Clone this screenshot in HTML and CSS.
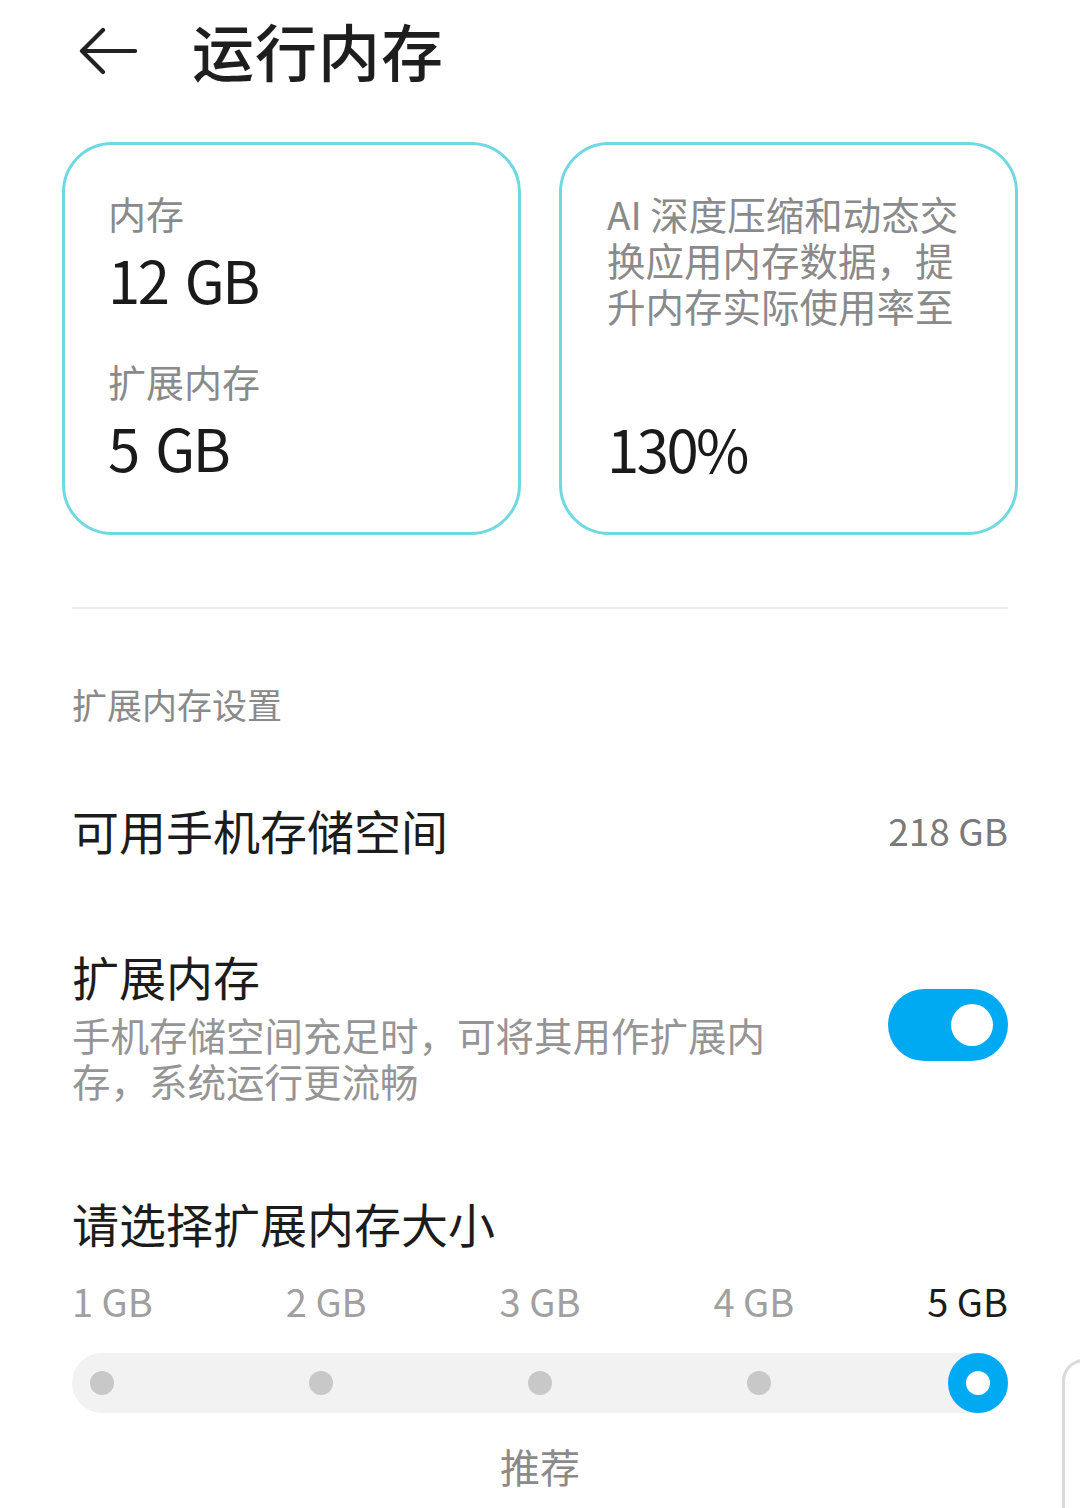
FILE: index.html
```html
<!DOCTYPE html>
<html lang="zh-CN">
<head>
<meta charset="utf-8">
<title>运行内存</title>
<link rel="stylesheet" href="styles.css">
</head>
<body>
<div class="page">
  <header class="header">
    <svg class="back" width="58" height="48" viewBox="0 0 58 48" aria-hidden="true">
      <path d="M3 24 H56 M24 3 L3 24 L24 45" fill="none" stroke="#222" stroke-width="4.2" stroke-linecap="round" stroke-linejoin="round"/>
    </svg>
    <h1 class="title">运行内存</h1>
  </header>

  <section class="cards">
    <div class="card card-left">
      <div class="card-label">内存</div>
      <div class="card-value">12 GB</div>
      <div class="card-label label-gap">扩展内存</div>
      <div class="card-value">5 GB</div>
    </div>
    <div class="card card-right">
      <div class="card-desc">AI 深度压缩和动态交换应用内存数据，提升内存实际使用率至</div>
      <div class="card-value value-gap">130%</div>
    </div>
  </section>

  <main class="main">
    <div class="divider"></div>
    <div class="section-label">扩展内存设置</div>

    <div class="row row-storage">
      <div class="row-title">可用手机存储空间</div>
      <div class="row-value">218 GB</div>
    </div>

    <div class="row row-toggle">
      <div class="row-text">
        <div class="row-title">扩展内存</div>
        <div class="row-sub">手机存储空间充足时，可将其用作扩展内存，系统运行更流畅</div>
      </div>
      <div class="toggle"><span class="knob"></span></div>
    </div>

    <div class="row-title choose-title">请选择扩展内存大小</div>
    <div class="size-labels">
      <span>1 GB</span>
      <span>2 GB</span>
      <span>3 GB</span>
      <span>4 GB</span>
      <span class="active">5 GB</span>
    </div>
    <div class="track">
      <div class="slot"><span class="dot"></span></div>
      <div class="slot"><span class="dot"></span></div>
      <div class="slot"><span class="dot"></span></div>
      <div class="slot"><span class="dot"></span></div>
      <div class="slot"><span class="ring"></span></div>
    </div>
    <div class="recommend">推荐</div>
  </main>

  <div class="edge-panel"></div>
</div>
</body>
</html>
```

FILE: styles.css
```css
* { box-sizing: border-box; }

html, body {
  margin: 0;
  padding: 0;
  background: #ffffff;
}

body {
  font-family: "Noto Sans CJK SC", "Noto Sans", sans-serif;
  color: #1c1c1c;
  width: 1080px;
  height: 1508px;
  overflow: hidden;
}

.page {
  position: relative;
  width: 1080px;
  height: 1508px;
}

.header {
  display: flex;
  align-items: center;
  height: 100px;
  padding-left: 79px;
}

.back { display: block; flex: none; margin-top: 2px; }

.title {
  margin: 0 0 0 55px;
  font-size: 62px;
  line-height: 80px;
  font-weight: 500;
  color: #1e1e1e;
  letter-spacing: 1px;
}

.cards {
  display: grid;
  grid-template-columns: 459px 459px;
  column-gap: 38px;
  margin-top: 42px;
  padding: 0 62px;
}

.card {
  height: 393px;
  border: 3px solid #70d8e0;
  border-radius: 50px;
  padding: 45px 0 0 43px;
}

.card-right { padding-left: 45px; }

.card-label {
  font-size: 38px;
  line-height: 46px;
  color: #8a8a8a;
}

.card-value {
  font-size: 58px;
  line-height: 70px;
  letter-spacing: -2.5px;
  word-spacing: 7px;
  color: #1a1a1a;
  margin-top: 8px;
}

.label-gap { margin-top: 44px; }

.card-desc {
  width: 372px;
  font-size: 38.5px;
  line-height: 46px;
  color: #8a8a8a;
}

.value-gap { margin-top: 85px; }

.main {
  padding: 0 72px;
}

.divider {
  margin-top: 72px;
  height: 2px;
  background: #ebebeb;
}

.section-label {
  margin-top: 75px;
  font-size: 35px;
  line-height: 40px;
  color: #8a8a8a;
}

.row {
  display: flex;
  align-items: center;
  justify-content: space-between;
}

.row-title {
  font-size: 47px;
  line-height: 60px;
  color: #1c1c1c;
}

.row-storage { margin-top: 76px; }

.row-value {
  font-size: 37px;
  line-height: 60px;
  color: #7a7a7a;
}

.row-toggle { margin-top: 86px; }

.row-sub {
  margin-top: 5px;
  width: 720px;
  font-size: 38.5px;
  line-height: 46px;
  color: #959595;
}

.toggle {
  flex: none;
  width: 120px;
  height: 72px;
  border-radius: 36px;
  background: #00aaf2;
  display: flex;
  align-items: center;
  justify-content: flex-end;
  padding-right: 15px;
}

.knob {
  width: 42px;
  height: 42px;
  border-radius: 50%;
  background: #ffffff;
}

.choose-title { margin-top: 90px; }

.size-labels {
  display: flex;
  justify-content: space-between;
  margin-top: 24px;
  font-size: 38px;
  line-height: 48px;
  color: #a0a0a0;
}

.size-labels .active { color: #1c1c1c; }

.track {
  margin-top: 28px;
  height: 60px;
  border-radius: 30px;
  background: #f2f2f2;
  display: flex;
  justify-content: space-between;
}

.slot {
  width: 60px;
  height: 60px;
  display: flex;
  align-items: center;
  justify-content: center;
}

.dot {
  width: 24px;
  height: 24px;
  border-radius: 50%;
  background: #c8c8c8;
}

.ring {
  width: 60px;
  height: 60px;
  border-radius: 50%;
  border: 18px solid #00aaf2;
  background: #ffffff;
}

.recommend {
  margin-top: 29px;
  text-align: center;
  font-size: 40px;
  line-height: 48px;
  color: #8a8a8a;
}

.edge-panel {
  position: absolute;
  left: 1062px;
  top: 1359px;
  width: 40px;
  height: 200px;
  border-top: 3px solid #dadada;
  border-left: 3px solid #dadada;
  border-top-left-radius: 22px;
}
```
